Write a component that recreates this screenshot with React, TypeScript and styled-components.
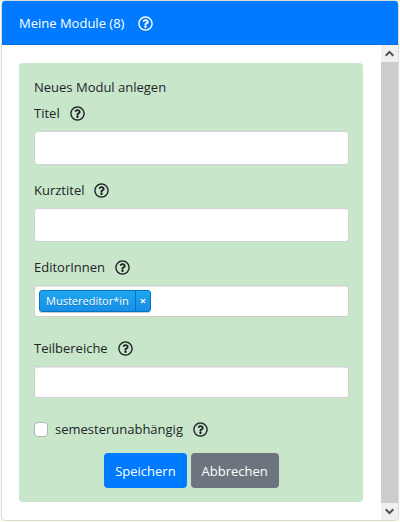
import React from "react";
import styled, { createGlobalStyle } from "styled-components";
import { FaRegQuestionCircle } from "react-icons/fa";

const GlobalStyle = createGlobalStyle`
  *, *::before, *::after { box-sizing: border-box; }
  html, body, #root { height: 100%; }
  body {
    margin: 0;
    background: #fdfdf0;
    color: #212529;
    font-family: "Segoe UI", "Open Sans", "Noto Sans", sans-serif;
    font-size: 13px;
    line-height: 26px;
  }
  button, input { font: inherit; }
`;

const Page = styled.main`
  display: flex;
  min-height: 100%;
  padding: 0 1px 1px;
`;

const Card = styled.section`
  flex: 1;
  min-width: 0;
  display: flex;
  flex-direction: column;
  overflow: hidden;
  background: #fff;
  border: 1px solid #dcdcd6;
  border-radius: 4px;
`;

const CardHeader = styled.header`
  display: flex;
  align-items: center;
  gap: 14px;
  padding: 9px 17px 8px;
  background: #007bff;
  border-bottom: 1px solid #006fe6;
  color: #fff;
`;

const Title = styled.h1`
  margin: 0;
  font-size: 13px;
  font-weight: 400;
`;

const HelpButton = styled.button`
  display: flex;
  padding: 0;
  border: 0;
  background: none;
  color: inherit;
  font-size: 15px;
  cursor: pointer;
`;

const CardBody = styled.div`
  flex: 1;
  display: flex;
`;

const Content = styled.div`
  flex: 1;
  min-width: 0;
  padding: 18px 18px 18px 17px;
`;

const Panel = styled.form`
  padding: 11px 14px 14px 15px;
  background: #c8e6c9;
  border-radius: 4px;
`;

const PanelTitle = styled.h2`
  margin: 0;
  font-size: 13px;
  font-weight: 400;
`;

const Field = styled.div<{ $after: number }>`
  display: flex;
  flex-direction: column;
  gap: 5px;
  margin-bottom: ${(p) => p.$after}px;
`;

const LabelRow = styled.div`
  display: flex;
  align-items: center;
  gap: 10px;
`;

const TextInput = styled.input`
  width: 100%;
  height: 34px;
  padding: 4px 11px;
  background: #fff;
  border: 1px solid #ced4da;
  border-radius: 4px;
`;

const TagBox = styled.div`
  display: flex;
  align-items: center;
  gap: 4px;
  height: 32px;
  padding: 0 4px;
  background: #fff;
  border: 1px solid #d0d0d0;
  border-radius: 3px;
  box-shadow: inset 0 1px 1px rgba(0, 0, 0, 0.1);
`;

const TagInput = styled.input`
  flex: 1;
  min-width: 0;
  height: 22px;
  padding: 0;
  border: 0;
  outline: 0;
  background: transparent;
`;

const Tag = styled.span`
  display: flex;
  height: 22px;
  border: 1px solid #0073bb;
  border-radius: 3px;
  background: linear-gradient(#1da7ee, #178ee9);
  box-shadow: 0 1px 0 rgba(0, 0, 0, 0.2);
  color: #fff;
  font-size: 11px;
  line-height: 20px;
  text-shadow: 0 1px 0 rgba(0, 51, 83, 0.3);
`;

const TagText = styled.span`
  padding: 0 6px;
`;

const TagRemove = styled.button`
  width: 15px;
  padding: 0;
  border: 0;
  border-left: 1px solid #0073bb;
  background: none;
  color: inherit;
  font-size: 11px;
  font-weight: 700;
  line-height: 20px;
  text-shadow: inherit;
`;

const CheckLabel = styled.label`
  display: flex;
  align-items: center;
  gap: 7px;
`;

const Checkbox = styled.input`
  appearance: none;
  width: 14px;
  height: 15px;
  margin: 0;
  background: #fff;
  border: 1px solid #adb5bd;
  border-radius: 4px;

  &:checked {
    background: #007bff;
  }
`;

const Actions = styled.div`
  display: flex;
  justify-content: center;
  gap: 4px;
  padding-top: 11px;
`;

const ActionButton = styled.button<{ $color: string }>`
  height: 35px;
  padding: 0 11px;
  border: 0;
  border-radius: 4px;
  background: ${(p) => p.$color};
  color: #fff;
`;

const Scrollbar = styled.div`
  display: flex;
  flex-direction: column;
  width: 17px;
  background: #cdcdcd;
`;

const ScrollButton = styled.button`
  display: flex;
  align-items: center;
  justify-content: center;
  height: 17px;
  padding: 0;
  border: 0;
  background: #f0f0f0;
`;

const ScrollTrack = styled.div`
  flex: 1;
`;

function Help({ topic }: { topic: string }) {
  return (
    <HelpButton type="button" aria-label={`Hilfe: ${topic}`}>
      <FaRegQuestionCircle />
    </HelpButton>
  );
}

function Chevron({ down = false }: { down?: boolean }) {
  return (
    <svg width="9" height="7" viewBox="0 0 9 7" aria-hidden="true">
      <path
        d={down ? "M.7 1.3 4.5 5.1 8.3 1.3" : "M.7 5.7 4.5 1.9 8.3 5.7"}
        fill="none"
        stroke="#505050"
        strokeWidth="2"
      />
    </svg>
  );
}

function FieldLabel({ id, text }: { id: string; text: string }) {
  return (
    <LabelRow>
      <label htmlFor={id}>{text}</label>
      <Help topic={text} />
    </LabelRow>
  );
}

export default function App() {
  return (
    <>
      <GlobalStyle />
      <Page>
        <Card>
          <CardHeader>
            <Title>Meine Module (8)</Title>
            <Help topic="Meine Module" />
          </CardHeader>
          <CardBody>
            <Content>
              <Panel onSubmit={(e) => e.preventDefault()}>
                <PanelTitle>Neues Modul anlegen</PanelTitle>
                <Field $after={12}>
                  <FieldLabel id="titel" text="Titel" />
                  <TextInput id="titel" type="text" />
                </Field>
                <Field $after={12}>
                  <FieldLabel id="kurztitel" text="Kurztitel" />
                  <TextInput id="kurztitel" type="text" />
                </Field>
                <Field $after={18}>
                  <FieldLabel id="editoren" text="EditorInnen" />
                  <TagBox>
                    <Tag>
                      <TagText>Mustereditor*in</TagText>
                      <TagRemove type="button" aria-label="Mustereditor*in entfernen">
                        ×
                      </TagRemove>
                    </Tag>
                    <TagInput id="editoren" type="text" />
                  </TagBox>
                </Field>
                <Field $after={18}>
                  <FieldLabel id="teilbereiche" text="Teilbereiche" />
                  <TagBox>
                    <TagInput id="teilbereiche" type="text" />
                  </TagBox>
                </Field>
                <LabelRow>
                  <CheckLabel>
                    <Checkbox type="checkbox" />
                    semesterunabhängig
                  </CheckLabel>
                  <Help topic="semesterunabhängig" />
                </LabelRow>
                <Actions>
                  <ActionButton type="submit" $color="#007bff">
                    Speichern
                  </ActionButton>
                  <ActionButton type="button" $color="#6c757d">
                    Abbrechen
                  </ActionButton>
                </Actions>
              </Panel>
            </Content>
            <Scrollbar>
              <ScrollButton type="button" aria-label="Nach oben">
                <Chevron />
              </ScrollButton>
              <ScrollTrack />
              <ScrollButton type="button" aria-label="Nach unten">
                <Chevron down />
              </ScrollButton>
            </Scrollbar>
          </CardBody>
        </Card>
      </Page>
    </>
  );
}
